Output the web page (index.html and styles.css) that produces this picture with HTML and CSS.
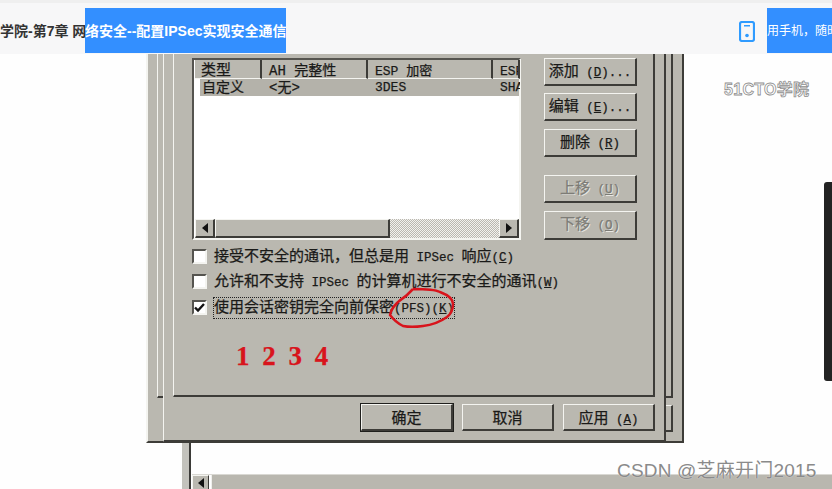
FILE: index.html
```html
<!DOCTYPE html>
<html lang="en">
<head>
    <meta charset="UTF-8">
    <meta name="viewport" content="width=device-width, initial-scale=1.0">
    <title>配置IPSec实现安全通信</title>
    <link rel="stylesheet" href="styles.css">
</head>
<body>
    <!-- top bar of the video page -->
    <header class="topbar">
        <span class="crumb">学院-第7章 网</span><span class="crumb-hl">络安全--配置IPSec实现安全通信</span>
        <svg class="phone" width="16" height="21" viewBox="0 0 16 21">
            <rect x="1" y="1" width="14" height="19" rx="2" fill="none" stroke="#2f9bff" stroke-width="2.2"/>
            <rect x="5" y="4" width="6" height="1.5" fill="#2f9bff"/>
            <circle cx="8" cy="14.5" r="1.8" fill="#2f9bff"/>
        </svg>
        <span class="mobile-hl">用手机，随时随地</span>
    </header>

    <main class="desk">
        <!-- window behind the dialog, only its scrollbar is left -->
        <div class="under-win">
            <div class="under-scroll">
                <span class="arrow-btn arrow-btn-left"></span>
                <span class="under-track"></span>
            </div>
        </div>

        <!-- frames of the stacked dialogs -->
        <div class="back-win"></div>
        <div class="back-panel"></div>
        <div class="back-btn"></div>

        <div class="dialog">
            <div class="tabpanel">
                <div class="list-row">
                    <div class="listview">
                        <div class="list-head">
                            <span class="col col-1">类型</span>
                            <span class="col col-2">AH 完整性</span>
                            <span class="col col-3">ESP 加密</span>
                            <span class="col col-4">ESP</span>
                        </div>
                        <div class="list-sel">
                            <span class="col col-1">自定义</span>
                            <span class="col col-2">&lt;无&gt;</span>
                            <span class="col col-3">3DES</span>
                            <span class="col col-4">SHA</span>
                        </div>
                        <div class="list-empty"></div>
                        <div class="hscroll">
                            <span class="arrow-btn arrow-btn-left"></span>
                            <span class="thumb"></span>
                            <span class="dither"></span>
                            <span class="arrow-btn arrow-btn-right"></span>
                        </div>
                    </div>
                    <div class="side-btns">
                        <button class="win-btn" type="button">添加<span class="lat"> (<u>D</u>)...</span></button>
                        <button class="win-btn" type="button">编辑<span class="lat"> (<u>E</u>)...</span></button>
                        <button class="win-btn btn-low" type="button">删除<span class="lat"> (<u>R</u>)</span></button>
                        <button class="win-btn win-btn-off btn-gap" type="button">上移<span class="lat"> (<u>U</u>)</span></button>
                        <button class="win-btn win-btn-off btn-low btn-tall" type="button">下移<span class="lat"> (<u>O</u>)</span></button>
                    </div>
                </div>

                <div class="options">
                    <div class="opt"><span class="check"></span><span class="opt-text">接受不安全的通讯，但总是用<span class="lat"> IPSec </span>响应<span class="lat">(<u>C</u>)</span></span></div>
                    <div class="opt"><span class="check"></span><span class="opt-text">允许和不支持<span class="lat"> IPSec </span>的计算机进行不安全的通讯<span class="lat">(<u>W</u>)</span></span></div>
                    <div class="opt opt-last">
                        <span class="check">
                            <svg width="11" height="11" viewBox="0 0 11 11"><path d="M1 5.5 L4 8.5 L10 2" fill="none" stroke="#111" stroke-width="2.4"/></svg>
                        </span>
                        <span class="opt-text opt-focus">使用会话密钥完全向前保密<span class="lat">(PFS)(<u>K</u>)</span></span>
                    </div>
                </div>

                <div class="scribble">1 2 3 4</div>
            </div>

            <div class="dialog-foot">
                <button class="win-btn win-btn-def" type="button">确定</button>
                <button class="win-btn" type="button">取消</button>
                <button class="win-btn" type="button">应用<span class="lat"> (<u>A</u>)</span></button>
            </div>

            <!-- red circle drawn on the video -->
            <svg class="red-ring" width="70" height="46" viewBox="0 0 70 46">
                <path d="M25 3 C36 3 46 3 52 6 C60 9 65 13 65 18 C65 24 63 28 59 31 C52 36 44 39 35 40 C28 41 20 41 15 40 C9 37 5 33 2 29 C3 24 6 20 9 17 C13 13 17 11 19 9 C21 7 23 5 25 3" fill="none" stroke="#d8141c" stroke-width="2.5"/>
            </svg>
        </div>

        <div class="logo-mark">51CTO学院</div>
        <div class="side-tab"></div>
        <div class="csdn-mark">CSDN @芝麻开门2015</div>
    </main>
</body>
</html>
```

FILE: styles.css
```css
* {
    box-sizing: border-box;
}
body {
    width: 832px;
    height: 489px;
    margin: 0;
    overflow: hidden;
    background-color: #fefefe;
    font-family: "Liberation Mono", "Noto Sans CJK SC", monospace;
    color: #1a1a18;
}
u {
    text-decoration: underline;
}
.lat {
    font-size: 12.5px;
}

/* top bar */
.topbar {
    display: flex;
    height: 54px;
    align-items: flex-start;
    overflow: hidden;
    border-top: 3px solid #efefef;
    background-color: #f7f7f8;
    font-family: "Liberation Sans", "Noto Sans CJK SC", sans-serif;
    font-size: 14px;
    font-weight: 700;
    line-height: 46px;
}
.crumb {
    width: 85px;
    flex: none;
    margin-top: 5px;
    color: #333;
    white-space: nowrap;
}
.crumb-hl {
    width: 201px;
    height: 45px;
    flex: none;
    margin-top: 5px;
    overflow: hidden;
    background-color: #338fff;
    color: #fff;
    white-space: nowrap;
}
.phone {
    flex: none;
    margin: 18px 0 0 453px;
}
.mobile-hl {
    width: 65px;
    height: 45px;
    flex: none;
    margin: 5px 0 0 12px;
    overflow: hidden;
    background-color: #338fff;
    color: #fff;
    font-size: 12px;
    font-weight: 400;
    white-space: nowrap;
}

/* desktop area under the bar, windows sit freely on it */
.desk {
    position: relative;
    height: 435px;
}
.under-win {
    position: absolute;
    left: 182px;
    top: 380px;
    width: 650px;
    height: 55px;
    border-left: 7px solid #c3c2bc;
}
.under-win::before {
    content: "";
    position: absolute;
    left: 0;
    top: 0;
    bottom: 0;
    width: 2px;
    background-color: #3b3a37;
}
.under-scroll {
    display: flex;
    height: 15px;
    margin: 40px 0 0 3px;
    gap: 2px;
    border-top: 1px solid #d9d8d3;
}
.under-track {
    flex: 1;
    background-color: #b9b7af;
    border-left: 1px solid #efefec;
}
.back-win {
    position: absolute;
    left: 146px;
    top: 0;
    width: 538px;
    height: 389px;
    border-left: 2px solid #f4f4f0;
    border-right: 2px solid #3d3c38;
    border-bottom: 2px solid #3d3c38;
    background-color: #bab8b0;
}
.back-panel {
    position: absolute;
    left: 157px;
    top: 0;
    width: 516px;
    height: 344px;
    border-left: 1px solid #f4f4f0;
    border-right: 2px solid #3d3c38;
    border-bottom: 2px solid #3d3c38;
}
.back-btn {
    position: absolute;
    left: 650px;
    top: 351px;
    width: 23px;
    height: 27px;
    border-top: 1px solid #f4f4f0;
    border-right: 2px solid #3d3c38;
    border-bottom: 2px solid #3d3c38;
}

/* front dialog */
.dialog {
    position: absolute;
    left: 163px;
    top: 0;
    width: 503px;
    height: 388px;
    padding-left: 9px;
    border-left: 1px solid #f4f4f0;
    border-right: 2px solid #3d3c38;
    border-bottom: 2px solid #3d3c38;
    background-color: #bab8b0;
    -webkit-text-stroke: 0.25px currentColor;
}
.tabpanel {
    position: relative;
    width: 482px;
    height: 343px;
    padding: 4px 0 0 18px;
    border-left: 1px solid #f4f4f0;
    border-right: 2px solid #3d3c38;
    border-bottom: 2px solid #3d3c38;
}
.list-row {
    display: flex;
    gap: 23px;
}
.listview {
    display: flex;
    width: 329px;
    height: 182px;
    flex-direction: column;
    flex: none;
    padding-left: 1px;
    border: 2px solid #55544f;
    border-right-color: #f4f4f0;
    border-bottom-color: #f4f4f0;
    background-color: #fff;
}
.list-head {
    display: flex;
    height: 19px;
    flex: none;
    font-size: 13px;
    line-height: 23px;
    background-color: #bab8b0;
}
.list-head .col {
    border-right: 2px solid #3d3c38;
    border-bottom: 1px solid #f4f4f0;
}
.list-sel {
    display: flex;
    height: 17px;
    flex: none;
    margin-left: 5px;
    background-color: #b4b2aa;
    font-size: 13px;
    line-height: 18px;
}
.list-sel .col-1 {
    width: 62px;
    padding-left: 2px;
    font-size: 14px;
}
.col {
    flex: none;
    overflow: hidden;
    white-space: nowrap;
}
.col-1 {
    width: 67px;
    padding-left: 6px;
    font-size: 15px;
}
.col-2 {
    width: 106px;
    padding-left: 7px;
    font-size: 14px;
}
.col-3 {
    width: 125px;
    padding-left: 7px;
}
.col-4 {
    width: 27px;
    padding-left: 7px;
}
.list-empty {
    flex: 1;
}
.hscroll {
    display: flex;
    height: 19px;
    flex: none;
    background-color: #bab8b0;
}
.thumb {
    width: 175px;
    border: 1px solid #f4f4f0;
    border-right: 2px solid #3d3c38;
    border-bottom: 2px solid #3d3c38;
    background-color: #bab8b0;
}
.dither {
    flex: 1;
    background: repeating-conic-gradient(#f2f1ee 0 25%, #bab8b0 0 50%) 0 0 / 2px 2px;
}
.arrow-btn {
    display: flex;
    width: 20px;
    align-items: center;
    justify-content: center;
    flex: none;
    border-top: 1px solid #f4f4f0;
    border-left: 1px solid #f4f4f0;
    border-right: 2px solid #3d3c38;
    border-bottom: 2px solid #3d3c38;
    background-color: #bab8b0;
}
.arrow-btn::before {
    content: "";
    border-top: 5px solid transparent;
    border-bottom: 5px solid transparent;
}
.arrow-btn-left::before {
    border-right: 6px solid #111;
}
.arrow-btn-right::before {
    border-left: 6px solid #111;
}
.under-scroll .arrow-btn {
    width: 17px;
    border-right-width: 1px;
    border-bottom: none;
}

/* buttons */
.side-btns {
    display: flex;
    width: 93px;
    flex-direction: column;
    flex: none;
    gap: 7px;
}
.win-btn {
    height: 28px;
    padding: 2px 0 0;
    border: 1px solid #f4f4f0;
    border-right: 2px solid #3d3c38;
    border-bottom: 2px solid #3d3c38;
    background-color: #bab8b0;
    color: #1a1a18;
    font-family: "Liberation Mono", "Noto Sans CJK SC", monospace;
    font-size: 15px;
    line-height: 22px;
    white-space: nowrap;
    -webkit-text-stroke: 0.25px currentColor;
}
.win-btn-off {
    color: #7d7c76;
    text-shadow: 1px 1px 0 #e9e8e3;
}
.btn-low {
    margin-top: 1px;
}
.btn-tall {
    height: 29px;
}
.btn-gap {
    margin-top: 11px;
}

/* checkboxes */
.options {
    display: flex;
    flex-direction: column;
    margin-top: 4px;
    font-size: 15px;
}
.opt {
    display: flex;
    height: 25px;
    align-items: center;
    gap: 7px;
    white-space: nowrap;
}
.opt-last {
    margin-top: 1px;
}
.opt-text {
    padding-top: 2px;
    line-height: 18px;
}
.opt-focus {
    outline: 1px dotted #222;
    outline-offset: 0;
}
.check {
    display: flex;
    width: 15px;
    height: 15px;
    align-items: center;
    justify-content: center;
    flex: none;
    border: 2px solid #55544f;
    border-right-color: #f4f4f0;
    border-bottom-color: #f4f4f0;
    background-color: #fff;
}
.scribble {
    margin: 22px 0 0 44px;
    color: #d8141c;
    font-family: "Liberation Serif", serif;
    font-size: 27px;
    font-weight: 700;
    letter-spacing: 3px;
    line-height: 28px;
    white-space: pre;
}

/* bottom buttons */
.dialog-foot {
    display: flex;
    width: 482px;
    justify-content: flex-end;
    gap: 9px;
    margin-top: 7px;
}
.dialog-foot .win-btn {
    width: 92px;
    height: 27px;
    padding-top: 4px;
}
.win-btn-def {
    outline: 1px solid #1f1f1c;
}
.red-ring {
    position: absolute;
    left: 224px;
    top: 232px;
}

/* things lying over the page */
.logo-mark {
    position: absolute;
    left: 724px;
    top: 22px;
    color: #fff;
    font-family: "Liberation Sans", "Noto Sans CJK SC", sans-serif;
    font-size: 16px;
    font-weight: 700;
    letter-spacing: 0.3px;
    -webkit-text-stroke: 0.8px #8e8e8e;
}
.side-tab {
    position: absolute;
    right: 0;
    top: 128px;
    width: 8px;
    height: 199px;
    border-radius: 3px 0 0 3px;
    background-color: #232323;
}
.csdn-mark {
    position: absolute;
    left: 617px;
    top: 406px;
    color: #8a8a8a;
    font-family: "Liberation Sans", "Noto Sans CJK SC", sans-serif;
    font-size: 19px;
    letter-spacing: 0.2px;
    line-height: 22px;
    text-shadow: 0 0 1px #fff;
    white-space: nowrap;
}
```
